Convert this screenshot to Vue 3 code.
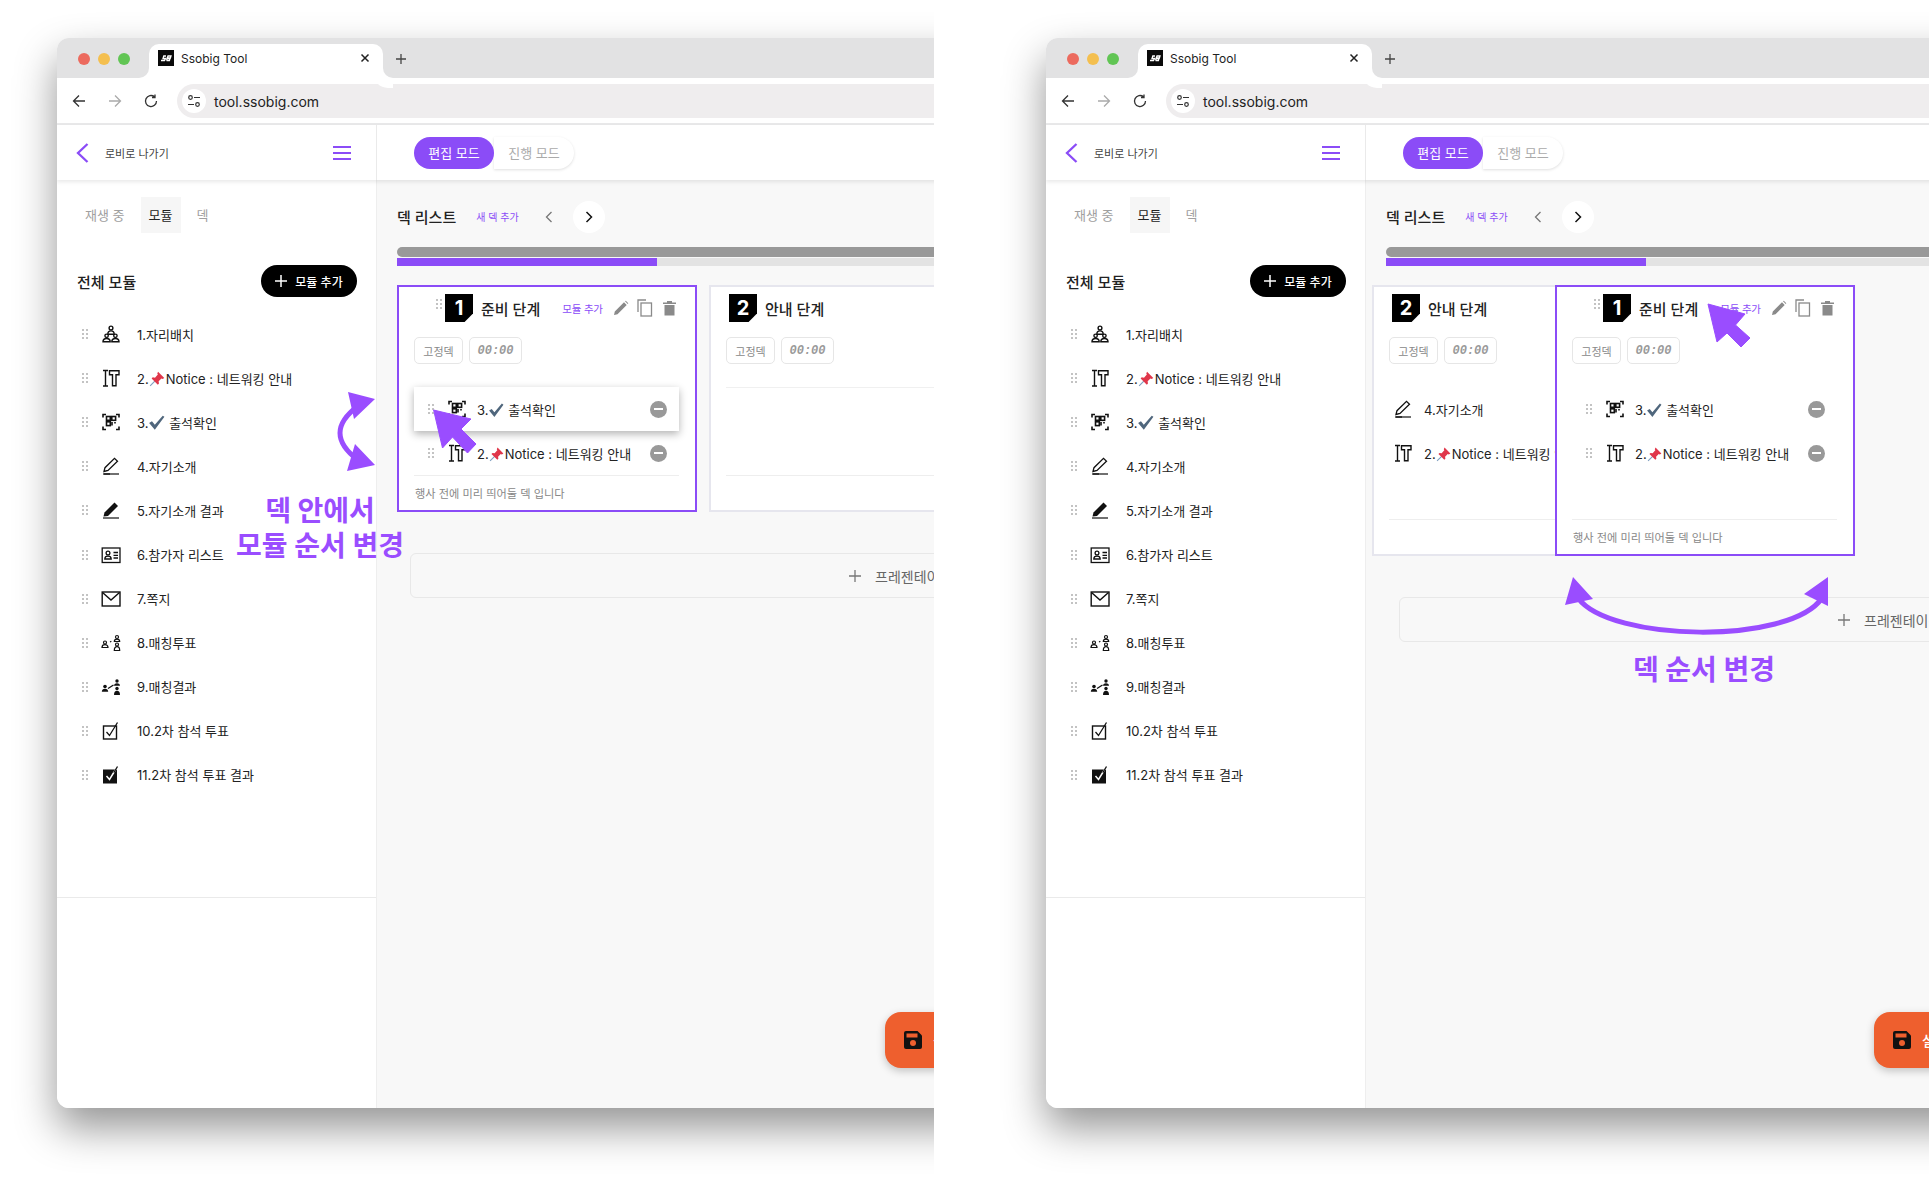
<script setup>
const icons = {
  seats: '<g fill="none" stroke="#111" stroke-width="1.4"><circle cx="10" cy="4" r="1.9"/><path d="M6.8 10.2c0-2.2 1.4-3.3 3.2-3.3s3.2 1.100 3.200 3.300z"/><circle cx="5.600" cy="11.800" r="1.700"/><circle cx="14.400" cy="11.800" r="1.700"/><path d="M2 17.800c0-2.200 1.500-3.300 3.600-3.300s3.600 1.100 3.600 3.300zM10.800 17.800c0-2.200 1.500-3.300 3.600-3.300s3.600 1.100 3.600 3.300z"/></g>',
  text: '<g fill="none" stroke="#111" stroke-width="1.4"><path d="M2 2.500h5M2 18h5M4.500 2.500V18"/><path d="M8.500 2.800h9.500v4h-3v11h-3.500v-11h-3z"/></g>',
  qr: '<g fill="none" stroke="#111" stroke-width="1.600"><path d="M2 5.500V2.500h3M15 2.500h3v3M2 14.500v3h3M15 17.500h3v-3"/><rect x="5.500" y="4.500" width="3.800" height="3.800"/><rect x="10.800" y="4.500" width="3.800" height="3.800"/><rect x="5.500" y="9.800" width="3.800" height="3.800"/><path d="M11 10v3.500M14 10v1.500"/></g>',
  pen: '<g fill="none" stroke="#111" stroke-width="1.300"><path d="M3 15.500l1-3.800L13.500 2.300l3 3L7 14.500z"/><path d="M2 18h16" stroke-width="1.200"/><path d="M3 18h6"/></g>',
  penFill: '<path d="M2.500 16.500l1-4L13.500 2.500l3.500 3.500L7 16z" fill="#111"/><path d="M2 18h16" stroke="#111" stroke-width="1.200"/>',
  card: '<g fill="none" stroke="#111" stroke-width="1.300"><rect x="1.200" y="3" width="17.800" height="14.500"/><circle cx="7" cy="8" r="1.900"/><path d="M3.800 14c0-1.800 1.300-2.800 3.200-2.800s3.200 1 3.200 2.800z"/><path d="M12.500 7.500h4.500M12.500 10.300h4.500M12.500 13h4.500"/></g>',
  mail: '<g fill="none" stroke="#111" stroke-width="1.400"><rect x="1.200" y="3" width="17.800" height="14"/><path d="M1.500 3.500L10 11l8.500-7.500"/></g>',
  match: '<g fill="none" stroke="#111" stroke-width="1.200"><circle cx="4" cy="9.500" r="1.500"/><path d="M1 14.500c0-1.800 1.200-2.800 3-2.800s3 1 3 2.800z"/><path d="M9 9l2-1" stroke-dasharray="1.500 1"/><circle cx="16" cy="4" r="1.500"/><path d="M13.300 8.500c0-1.500 1-2.300 2.700-2.300s2.700.8 2.700 2.300z"/><circle cx="16" cy="11.500" r="1.500"/><path d="M13.300 17.500c0-2.500 1-3.800 2.700-3.800s2.700 1.300 2.700 3.800z"/></g>',
  matchFill: '<g fill="#111"><circle cx="4" cy="9.500" r="1.800"/><path d="M.8 14.800c0-2 1.300-3 3.200-3s3.200 1 3.200 3z"/><circle cx="16" cy="4" r="1.700"/><path d="M13 8.800c0-1.600 1.200-2.500 3-2.500s3 .9 3 2.500z"/><circle cx="16" cy="11.500" r="1.700"/><path d="M13 18c0-2.800 1.200-4.200 3-4.200s3 1.400 3 4.200z"/></g><path d="M7 11.500l5.500-3.500" stroke="#111" stroke-width="1.300"/>',
  check: '<g fill="none" stroke="#111"><rect x="2.500" y="5" width="13" height="13" stroke-width="1.400"/><path d="M5.500 11l3 3.500L16.500 1.500" stroke-width="1.300"/></g>',
  checkFill: '<rect x="2" y="4.500" width="14" height="14" fill="#111"/><path d="M5.500 11l3 3.500L16.500 1.500" fill="none" stroke="#fff" stroke-width="1.500"/><path d="M12.800 7.600L16.500 1.500" fill="none" stroke="#111" stroke-width="1.300"/>',
};

const modules = [
  { n: '1.자리배치', icon: 'seats' },
  { n: '2.', after: 'Notice : 네트워킹 안내', emoji: 'pin', icon: 'text' },
  { n: '3.', after: ' 출석확인', emoji: 'tick', icon: 'qr' },
  { n: '4.자기소개', icon: 'pen' },
  { n: '5.자기소개 결과', icon: 'penFill' },
  { n: '6.참가자 리스트', icon: 'card' },
  { n: '7.쪽지', icon: 'mail' },
  { n: '8.매칭투표', icon: 'match' },
  { n: '9.매칭결과', icon: 'matchFill' },
  { n: '10.2차 참석 투표', icon: 'check' },
  { n: '11.2차 참석 투표 결과', icon: 'checkFill' },
];
const [, notice, attend, intro] = modules;

const deckOne = { num: 1, title: '준비 단계', active: true, handle: true, foot: '행사 전에 미리 띄어둘 덱 입니다', rows: [attend, notice] };

const shots = [
  {
    key: 'a',
    decks: [
      { ...deckOne, lifted: true },
      { num: 2, title: '안내 단계', rows: [], foot: '' },
    ],
  },
  {
    key: 'b',
    decks: [
      { num: 2, title: '안내 단계', rows: [intro, notice], plain: true, foot: '' },
      { ...deckOne },
    ],
  },
];
const progress = 260;
</script>

<template>
  <div class="page">
    <section v-for="shot in shots" :key="shot.key" class="shot" :class="'shot-' + shot.key">
      <div class="window">
        <div class="tabbar">
          <span class="light red"></span><span class="light amber"></span><span class="light green"></span>
          <div class="tab">
            <svg class="favicon" width="16" height="16" viewBox="0 0 16 16">
              <rect width="16" height="16" fill="#0a0a0a" />
              <path d="M3 10.500h3.500l1-2H5l.8-2.500H8M8.500 10.500L10 6h3l-.6 2h-2.400M9 8.500h3l-.6 2H8.500" fill="none" stroke="#fff" stroke-width="1.300" />
            </svg>
            <span class="tab-title">Ssobig Tool</span>
            <svg class="tab-close" width="10" height="10" viewBox="0 0 10 10"><path d="M1.500 1.500l7 7M8.500 1.500l-7 7" stroke="#222" stroke-width="1.500" /></svg>
          </div>
          <svg class="tab-new" width="12" height="12" viewBox="0 0 12 12"><path d="M6 1v10M1 6h10" stroke="#444" stroke-width="1.300" /></svg>
        </div>

        <div class="toolbar">
          <svg width="14" height="14" viewBox="0 0 14 14"><path d="M13 7H1.500M7 1.500L1.500 7 7 12.500" fill="none" stroke="#333" stroke-width="1.300" /></svg>
          <svg width="14" height="14" viewBox="0 0 14 14"><path d="M1 7h11.500M7 1.500L12.500 7 7 12.500" fill="none" stroke="#aaa" stroke-width="1.300" /></svg>
          <svg width="14" height="14" viewBox="0 0 14 14"><path d="M12.500 7A5.500 5.500 0 1 1 10.500 2.800M11 .5v3H8" fill="none" stroke="#333" stroke-width="1.300" /></svg>
          <div class="omnibox">
            <span class="site-icon">
              <svg width="14" height="14" viewBox="0 0 14 14" fill="none" stroke="#333" stroke-width="1.200"><circle cx="3.500" cy="3.500" r="1.800" /><path d="M7 3.500h6M1 10.500h6" /><circle cx="10.500" cy="10.500" r="1.800" /></svg>
            </span>
            <span class="url">tool.ssobig.com</span>
          </div>
        </div>

        <header class="app-head">
          <div class="lobby">
            <svg width="13" height="20" viewBox="0 0 13 20"><path d="M11.500 1L2 10l9.500 9" fill="none" stroke="#8b4cf7" stroke-width="2.300" /></svg>
            <span class="lobby-text">로비로 나가기</span>
            <svg class="menu" width="18" height="14" viewBox="0 0 18 14"><path d="M0 1h18M0 7h18M0 13h18" stroke="#8b4cf7" stroke-width="1.800" /></svg>
          </div>
          <div class="modes">
            <span class="mode on">편집 모드</span>
            <span class="mode">진행 모드</span>
          </div>
        </header>

        <div class="body">
          <aside class="side">
            <div class="side-top">
              <nav class="side-tabs">
                <span class="side-tab">재생 중</span>
                <span class="side-tab on">모듈</span>
                <span class="side-tab">덱</span>
              </nav>
              <div class="side-title">
                <span>전체 모듈</span>
                <button class="add-mod">
                  <svg width="12" height="12" viewBox="0 0 12 12"><path d="M6 0v12M0 6h12" stroke="#fff" stroke-width="1.500" /></svg>
                  모듈 추가
                </button>
              </div>
              <ul class="mods">
                <li v-for="m in modules" :key="m.n" class="mod">
                  <svg class="grip" width="6" height="10" viewBox="0 0 6 10" fill="#777"><circle cx="1" cy="1" r=".8" /><circle cx="5" cy="1" r=".8" /><circle cx="1" cy="5" r=".8" /><circle cx="5" cy="5" r=".8" /><circle cx="1" cy="9" r=".8" /><circle cx="5" cy="9" r=".8" /></svg>
                  <svg class="mod-icon" width="20" height="20" viewBox="0 0 20 20" v-html="icons[m.icon]"></svg>
                  <span class="mod-name">{{ m.n }}<svg v-if="m.emoji === 'pin'" class="emoji" width="17" height="17" viewBox="0 0 15 15"><path d="M1 14l5-5" stroke="#7f9fc0" stroke-width="1" /><path d="M8 1.500l5.500 5.500-1.500 1-1-.5-2.500 2.500.3 2-1 1-5.500-5.500 1-1 2 .3L7.800 4 7.300 3z" fill="#e0364a" /></svg><svg v-if="m.emoji === 'tick'" class="emoji" width="17" height="17" viewBox="0 0 15 15"><path d="M1 8l2.500-1.500 2.500 3L13 1.500l1.500 1L6 14z" fill="#4f667c" /></svg>{{ m.after }}</span>
                </li>
              </ul>
            </div>
          </aside>

          <main class="main">
            <div class="list-head">
              <span class="list-title">덱 리스트</span>
              <span class="link new-deck">새 덱 추가</span>
              <svg class="pg-prev" width="8" height="12" viewBox="0 0 8 12"><path d="M6.500 1L1.500 6l5 5" fill="none" stroke="#777" stroke-width="1.300" /></svg>
              <span class="pg-next"><svg width="8" height="12" viewBox="0 0 8 12"><path d="M1.500 1l5 5-5 5" fill="none" stroke="#111" stroke-width="1.500" /></svg></span>
            </div>
            <div class="bar-gray"></div>
            <div class="bar-track"><div class="bar-fill" :style="{ width: progress + 'px' }"></div></div>

            <div class="decks">
              <article v-for="d in shot.decks" :key="d.num" class="deck" :class="{ active: d.active }">
                <div class="deck-head">
                  <svg v-if="d.handle" class="deck-grip" width="6" height="10" viewBox="0 0 6 10" fill="#777"><circle cx="1" cy="1" r=".8" /><circle cx="5" cy="1" r=".8" /><circle cx="1" cy="5" r=".8" /><circle cx="5" cy="5" r=".8" /><circle cx="1" cy="9" r=".8" /><circle cx="5" cy="9" r=".8" /></svg>
                  <span class="badge">{{ d.num }}</span>
                  <span class="deck-title">{{ d.title }}</span>
                  <template v-if="d.active">
                    <span class="link deck-add">모듈 추가</span>
                    <svg class="tool" width="16" height="16" viewBox="0 0 16 16"><path d="M1 15l.8-3.500L11 2.300l2.700 2.700L4.500 14.200zM12 1.300l.8-.6 2.500 2.500-.6.800z" fill="#8a8a8a" /></svg>
                    <svg class="tool" width="16" height="18" viewBox="0 0 16 18" fill="none" stroke="#8a8a8a" stroke-width="1.300"><path d="M1 13V1h8" /><rect x="4" y="4" width="10.500" height="13" /></svg>
                    <svg class="tool" width="13" height="16" viewBox="0 0 13 16"><path d="M0 2.500h13v1.500H0zM4 1h5v1.500H4zM1.500 5h10v10.500h-10z" fill="#8a8a8a" /></svg>
                  </template>
                </div>
                <div class="tags">
                  <span class="tag">고정덱</span>
                  <span class="tag time">00:00</span>
                </div>
                <div class="deck-rows">
                  <div v-for="(r, i) in d.rows" :key="r.icon" class="row" :class="{ lifted: d.lifted && i === 0, plain: d.plain }">
                    <svg v-if="!d.plain" class="grip" width="6" height="10" viewBox="0 0 6 10" fill="#777"><circle cx="1" cy="1" r=".8" /><circle cx="5" cy="1" r=".8" /><circle cx="1" cy="5" r=".8" /><circle cx="5" cy="5" r=".8" /><circle cx="1" cy="9" r=".8" /><circle cx="5" cy="9" r=".8" /></svg>
                    <svg class="row-icon" width="20" height="20" viewBox="0 0 20 20" v-html="icons[r.icon]"></svg>
                    <span class="row-name">{{ r.n }}<svg v-if="r.emoji === 'pin'" class="emoji" width="16" height="16" viewBox="0 0 15 15"><path d="M1 14l5-5" stroke="#7f9fc0" stroke-width="1" /><path d="M8 1.500l5.500 5.500-1.500 1-1-.5-2.500 2.500.3 2-1 1-5.500-5.500 1-1 2 .3L7.800 4 7.300 3z" fill="#e0364a" /></svg><svg v-if="r.emoji === 'tick'" class="emoji" width="16" height="16" viewBox="0 0 15 15"><path d="M1 8l2.500-1.500 2.500 3L13 1.500l1.500 1L6 14z" fill="#4f667c" /></svg>{{ r.after }}</span>
                    <span v-if="!d.plain" class="minus"></span>
                  </div>
                </div>
                <div class="deck-foot">{{ d.foot }}</div>
              </article>
            </div>

            <div class="add-pres">
              <svg width="12" height="12" viewBox="0 0 12 12"><path d="M6 0v12M0 6h12" stroke="#777" stroke-width="1.300" /></svg>
              <span>프레젠테이션 추가</span>
            </div>
          </main>
        </div>

        <button class="save">
          <svg width="18" height="18" viewBox="0 0 18 18"><path d="M2 0h11.500L18 4.500V16a2 2 0 0 1-2 2H2a2 2 0 0 1-2-2V2a2 2 0 0 1 2-2z" fill="#111" /><rect x="2.500" y="2.500" width="11" height="4" fill="#ee5f2e" /><circle cx="9" cy="12" r="3" fill="#ee5f2e" /></svg>
          <span>설정 저장</span>
        </button>
      </div>

      <template v-if="shot.key === 'a'">
        <svg class="overlay" width="934" height="1183" viewBox="0 0 934 1183">
          <path d="M358 406C334 424 334 442 358 460" fill="none" stroke="#9a4dff" stroke-width="5" />
          <path d="M375 399L348 392 354 419zM375 465L347 471 355 444z" fill="#9a4dff" />
          <path d="M433.600 410L471 419 461 429 476 444 467.500 453 452.500 437 442.500 448z" fill="#9a4dff" stroke="#9a4dff" stroke-linejoin="round" />
        </svg>
        <div class="note note-a">덱 안에서<br />모듈 순서 변경</div>
      </template>
      <template v-else>
        <svg class="overlay" width="995" height="1183" viewBox="0 0 995 1183">
          <path d="M644 598C676 642 856 645 888 598" fill="none" stroke="#9a4dff" stroke-width="5" />
          <path d="M639 577L631 605 659 599zM894 577L870 594 894 606z" fill="#9a4dff" />
          <path d="M774 304L811 314 801.500 325 816 338 807 347 793 333 783 342z" fill="#9a4dff" stroke="#9a4dff" stroke-linejoin="round" />
        </svg>
        <div class="note note-b">덱 순서 변경</div>
      </template>
    </section>
  </div>
</template>

<style>
html, body { margin: 0; background: #fff; }
</style>

<style scoped>
.page {
  display: flex;
  width: 1929px;
  height: 1183px;
  overflow: hidden;
  background: #fff;
  font-family: Inter, "Noto Sans CJK KR", sans-serif;
  color: #222;
}
.shot { position: relative; height: 1183px; overflow: hidden; flex-shrink: 0; background: #fff; }
.shot-a { width: 934px; }
.shot-b { width: 995px; }

.window {
  position: relative;
  width: 1500px;
  height: 1070px;
  margin-top: 38px;
  border-radius: 12px 0 0 12px;
  background: #fff;
  box-shadow: 0 20px 42px rgba(0, 0, 0, 0.42);
  display: flex;
  flex-direction: column;
  overflow: hidden;
}
.shot-a .window { margin-left: 57px; }
.shot-b .window { margin-left: 112px; }

.tabbar {
  height: 40px;
  background: #e2e2e3;
  display: flex;
  align-items: flex-start;
  padding-left: 21px;
  box-sizing: border-box;
  flex-shrink: 0;
}
.light { width: 12px; height: 12px; border-radius: 50%; margin: 15px 8px 0 0; }
.red { background: #ec6a5e; }
.amber { background: #f4bf4f; }
.green { background: #61c554; }
.tab {
  position: relative;
  width: 234px;
  height: 34px;
  margin: 6px 0 0 11px;
  background: #fff;
  border-radius: 10px 10px 0 0;
  display: flex;
  align-items: center;
  padding: 0 13px 6px 9px;
  box-sizing: border-box;
}
.tab::before, .tab::after {
  content: "";
  position: absolute;
  bottom: 0;
  width: 10px;
  height: 10px;
  background: transparent;
}
.tab::before { left: -10px; border-bottom-right-radius: 10px; box-shadow: 5px 5px 0 5px #fff; }
.tab::after { right: -10px; border-bottom-left-radius: 10px; box-shadow: -5px 5px 0 5px #fff; }
.favicon { flex-shrink: 0; }
.tab-title { margin-left: 7px; font-size: 12px; color: #222; flex: 1; }
.tab-new { margin: 15px 0 0 12px; }

.toolbar {
  height: 47px;
  flex-shrink: 0;
  background: #fff;
  border-radius: 10px 0 0 0;
  border-bottom: 2px solid #e9e9ea;
  box-sizing: border-box;
  display: flex;
  align-items: center;
  gap: 22px;
  padding: 1px 0 0 15px;
}
.omnibox {
  width: 1300px;
  height: 34px;
  margin-left: -3px;
  background: #efedee;
  border-radius: 17px;
  display: flex;
  align-items: center;
  padding-left: 5px;
  box-sizing: border-box;
}
.site-icon { width: 24px; height: 24px; background: #fff; border-radius: 50%; display: flex; align-items: center; justify-content: center; }
.url { margin-left: 8px; font-size: 14px; color: #222; }

.app-head {
  height: 55px;
  flex-shrink: 0;
  display: flex;
  background: #fff;
  box-shadow: 0 2px 4px rgba(0, 0, 0, 0.09);
  position: relative;
  z-index: 2;
}
.lobby {
  width: 320px;
  box-sizing: border-box;
  border-right: 1px solid #eaeaea;
  display: flex;
  align-items: center;
  padding: 0 25px 0 19px;
}
.lobby-text { margin-left: 16px; font-size: 11px; color: #444; flex: 1; }
.modes { display: flex; align-items: center; padding-left: 37px; }
.mode {
  height: 32px;
  width: 80px;
  display: flex;
  align-items: center;
  justify-content: center;
  font-size: 13px;
  color: #aaa;
  background: #fff;
  border-radius: 0 16px 16px 0;
  box-shadow: 0 1px 3px rgba(0, 0, 0, 0.13);
}
.mode.on { background: #8b4cf7; color: #fff; border-radius: 16px; position: relative; z-index: 1; box-shadow: none; }

.body { flex: 1; display: flex; min-height: 0; }
.side { width: 320px; flex-shrink: 0; box-sizing: border-box; border-right: 1px solid #eee; background: #fff; }
.side-top { height: 718px; box-sizing: border-box; border-bottom: 1px solid #eaeaea; }
.side-tabs { display: flex; align-items: center; padding: 17px 0 0 19px; height: 36px; box-sizing: content-box; }
.side-tab { font-size: 13px; color: #a0a0a0; padding: 0 9px; height: 36px; line-height: 36px; margin-right: 3px; }
.side-tab:first-child { padding-left: 9px; margin-right: 7px; }
.side-tab.on { width: 40px; padding: 0; text-align: center; background: #f6f6f6; color: #222; margin-right: 7px; }
.side-title { display: flex; align-items: center; justify-content: space-between; margin: 32px 0 0 20px; width: 280px; font-size: 15px; font-weight: 500; color: #222; }
.add-mod {
  height: 32px;
  width: 96px;
  border: 0;
  border-radius: 16px;
  background: #000;
  color: #fff;
  font: 500 12px Inter, "Noto Sans CJK KR", sans-serif;
  display: flex;
  align-items: center;
  justify-content: center;
  gap: 8px;
  padding: 0;
}
.mods { list-style: none; margin: 15px 0 0; padding: 0 0 0 25px; }
.mod { height: 44.100px; display: flex; align-items: center; }
.mod-icon { margin-left: 13px; flex-shrink: 0; }
.mod-name { margin-left: 16px; font-size: 13px; color: #222; white-space: nowrap; }
.emoji { vertical-align: -3px; }

.main { flex: 1; background: #f8f8f8; padding: 0 0 0 20px; min-width: 0; }
.list-head { height: 73px; display: flex; align-items: center; box-sizing: border-box; }
.list-title { font-size: 15px; font-weight: 500; color: #222; }
.link { color: #8b4cf7; font-size: 10px; }
.new-deck { margin-left: 20px; }
.pg-prev { margin-left: 26px; }
.pg-next { width: 32px; height: 32px; margin-left: 20px; background: #fff; border-radius: 50%; display: flex; align-items: center; justify-content: center; }
.bar-gray { height: 10px; border-radius: 5px; background: #999; margin-top: -6px; }
.bar-track { height: 8px; background: #e3e3e3; margin-top: 1px; }
.bar-fill { height: 8px; background: #8b4cf7; }

.decks { display: flex; align-items: stretch; gap: 12px; margin-top: 19px; }
.deck {
  width: 300px;
  flex-shrink: 0;
  box-sizing: border-box;
  border: 2px solid #e6e6ee;
  background: #fff;
  display: flex;
  flex-direction: column;
  padding: 7px 16px 0 15px;
  position: relative;
}
.deck.active { border-color: #8b4cf7; }
.shot-b .decks { margin-left: -14px; gap: 0; }
.shot-b .deck.active { margin-left: -117px; z-index: 1; }
.deck-head { height: 28px; display: flex; align-items: center; padding-left: 3px; }
.deck.active .deck-head { padding-left: 22px; }
.deck-grip { margin-right: 3px; margin-top: -8px; flex-shrink: 0; }
.badge {
  width: 28px;
  height: 28px;
  background: #000;
  color: #fff;
  font-size: 20px;
  font-weight: 700;
  display: flex;
  align-items: center;
  justify-content: center;
  clip-path: polygon(0 0, 100% 0, 100% 70%, 70% 100%, 0 100%);
  flex-shrink: 0;
}
.deck-title { margin-left: 8px; font-size: 15px; font-weight: 500; color: #222; white-space: nowrap; }
.deck-add { margin-left: 22px; white-space: nowrap; font-size: 10.500px; letter-spacing: -0.2px; }
.tool { margin-left: 8px; flex-shrink: 0; }
.deck-add + .tool { margin-left: 10px; }
.tool:last-child { margin-left: 10px; }
.tags { display: flex; gap: 6px; margin-top: 15px; }
.tag { height: 27px; width: 49px; border: 1px solid #e6e6e6; border-radius: 5px; box-sizing: border-box; display: flex; align-items: center; justify-content: center; font-size: 11px; color: #888; background: #fff; }
.tag.time { width: 53px; font: italic 700 12px "Liberation Mono", monospace; color: #999; }
.deck-rows { height: 89px; margin-top: 23px; border-top: 1px solid #f0f0f0; border-bottom: 1px solid #eeeeee; box-sizing: border-box; display: flex; flex-direction: column; }
.shot-b .deck-rows { height: 133px; }
.row { height: 44px; flex-shrink: 0; display: flex; align-items: center; padding: 0 12px 0 14px; background: #fff; }
.row:first-child { margin-top: -1px; }
.row.plain { padding-left: 4px; }
.row.lifted { box-shadow: 0 3px 8px rgba(0, 0, 0, 0.3); position: relative; z-index: 1; }
.row-icon { margin-left: 13px; flex-shrink: 0; }
.row.plain .row-icon { margin-left: 0; }
.row-name { margin-left: 10px; font-size: 13px; color: #222; flex: 1; white-space: nowrap; overflow: hidden; }
.row.plain .row-name { overflow: visible; margin-left: 11px; }
.minus { position: relative; width: 17px; height: 17px; border-radius: 50%; background: #999; flex-shrink: 0; }
.minus::after { content: ""; position: absolute; left: 4px; right: 4px; top: 7.500px; height: 2px; background: #fff; }
.deck-foot { height: 34px; line-height: 36px; padding-left: 1px; font-size: 11.200px; color: #888; white-space: nowrap; }
.add-pres {
  margin: 41px 0 0 13px;
  height: 45px;
  width: 1200px;
  box-sizing: border-box;
  border: 1px solid #e8e8e8;
  border-radius: 6px;
  display: flex;
  align-items: center;
  gap: 14px;
  padding-left: 438px;
  font-size: 14px;
  color: #666;
}

.save {
  position: absolute;
  left: 828px;
  top: 974px;
  width: 180px;
  height: 56px;
  border: 0;
  border-radius: 16px;
  background: #ee5f2e;
  color: #fff;
  box-shadow: 0 3px 8px rgba(0, 0, 0, 0.22);
  display: flex;
  align-items: center;
  gap: 11px;
  padding: 0 0 0 19px;
  font: 500 14px Inter, "Noto Sans CJK KR", sans-serif;
  z-index: 3;
}
.overlay { position: absolute; left: 0; top: 0; pointer-events: none; z-index: 5; }
.note { position: absolute; z-index: 6; color: #9a4dff; font-weight: 700; text-align: center; white-space: nowrap; }
.note-a { left: 220px; top: 494px; width: 200px; font-size: 28px; line-height: 35px; }
.note-b { left: 670px; top: 652px; width: 200px; font-size: 28px; line-height: 36px; }
</style>
